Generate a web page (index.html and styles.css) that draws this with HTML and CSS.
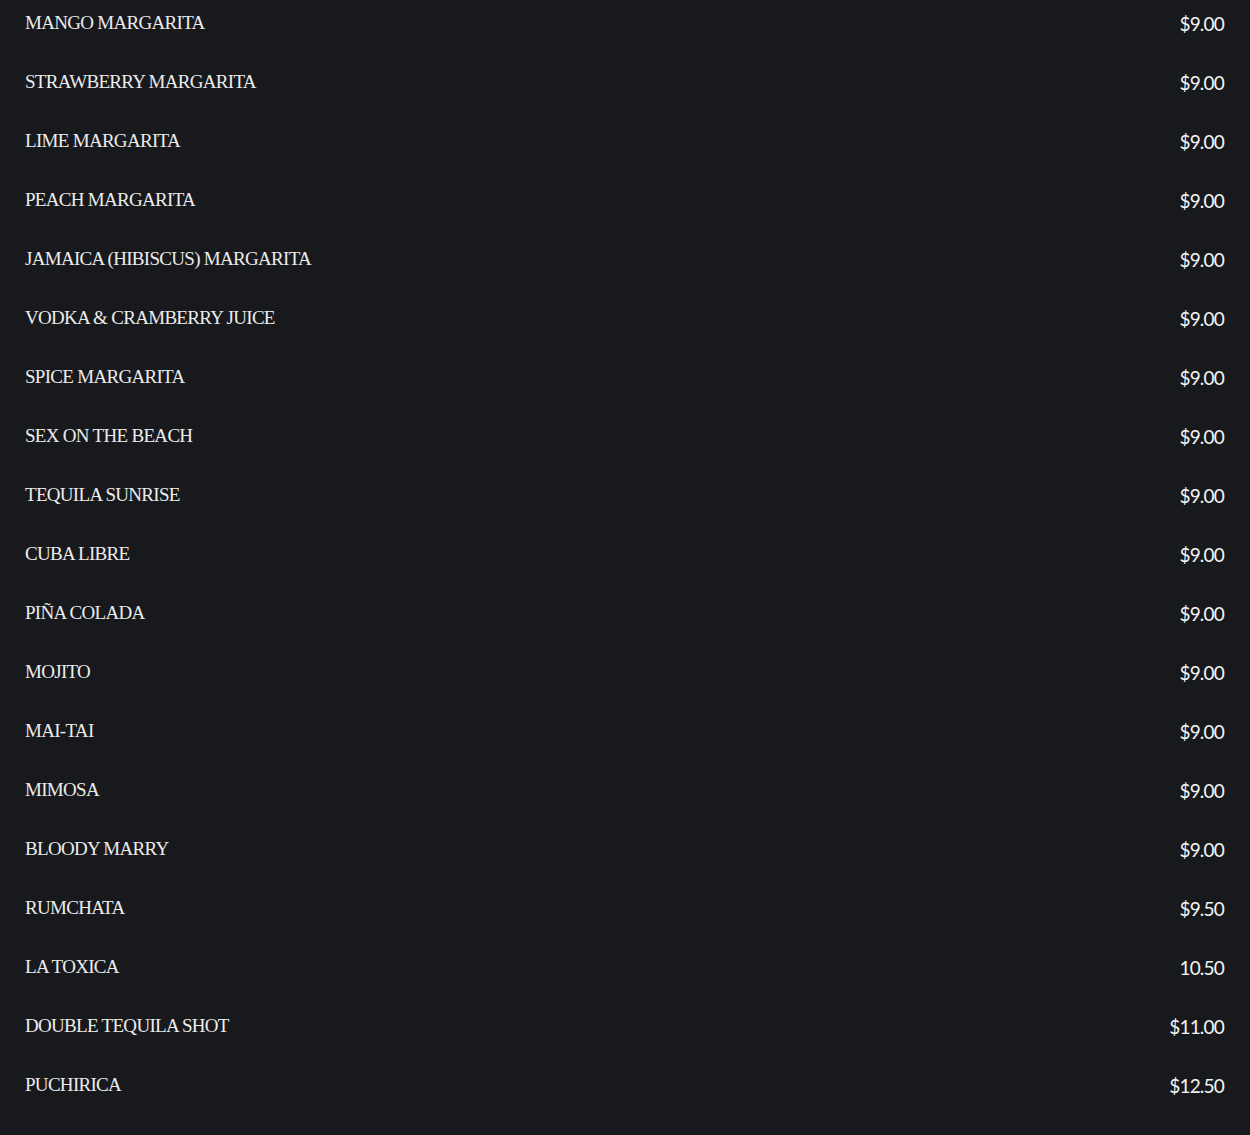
FILE: index.html
```html
<!DOCTYPE html>
<html>
<head>
<meta charset="utf-8">
<link rel="stylesheet" href="styles.css">
</head>
<body>
<ul class="menu">
<li class="item"><span class="name">MANGO MARGARITA</span><span class="price">$9.00</span></li>
<li class="item"><span class="name">STRAWBERRY MARGARITA</span><span class="price">$9.00</span></li>
<li class="item"><span class="name">LIME MARGARITA</span><span class="price">$9.00</span></li>
<li class="item"><span class="name">PEACH MARGARITA</span><span class="price">$9.00</span></li>
<li class="item"><span class="name">JAMAICA (HIBISCUS) MARGARITA</span><span class="price">$9.00</span></li>
<li class="item"><span class="name">VODKA &amp; CRAMBERRY JUICE</span><span class="price">$9.00</span></li>
<li class="item"><span class="name">SPICE MARGARITA</span><span class="price">$9.00</span></li>
<li class="item"><span class="name">SEX ON THE BEACH</span><span class="price">$9.00</span></li>
<li class="item"><span class="name">TEQUILA SUNRISE</span><span class="price">$9.00</span></li>
<li class="item"><span class="name">CUBA LIBRE</span><span class="price">$9.00</span></li>
<li class="item"><span class="name">PIÑA COLADA</span><span class="price">$9.00</span></li>
<li class="item"><span class="name">MOJITO</span><span class="price">$9.00</span></li>
<li class="item"><span class="name">MAI-TAI</span><span class="price">$9.00</span></li>
<li class="item"><span class="name">MIMOSA</span><span class="price">$9.00</span></li>
<li class="item"><span class="name">BLOODY MARRY</span><span class="price">$9.00</span></li>
<li class="item"><span class="name">RUMCHATA</span><span class="price">$9.50</span></li>
<li class="item"><span class="name">LA TOXICA</span><span class="price">10.50</span></li>
<li class="item"><span class="name">DOUBLE TEQUILA SHOT</span><span class="price">$11.00</span></li>
<li class="item"><span class="name">PUCHIRICA</span><span class="price">$12.50</span></li>
<li class="item"><span class="name">MICHELADA</span><span class="price">$12.50</span></li>
</ul>
</body>
</html>
```
FILE: styles.css
```css
html, body {
  margin: 0;
  padding: 0;
  background: #18191c;
  height: 100%;
  overflow: hidden;
}
.menu {
  list-style: none;
  margin: 0;
  padding: 11px 26px 0 25px;
  display: flex;
  flex-direction: column;
  gap: 35px;
}
.item {
  display: flex;
  justify-content: space-between;
  align-items: center;
  height: 24px;
  color: #ececec;
}
.name {
  font-family: "Liberation Serif", serif;
  font-size: 19px;
  letter-spacing: -0.7px;
}
.price {
  font-family: "Lato", sans-serif;
  font-size: 19px;
  letter-spacing: -0.8px;
  color: #f4f4f4;
}
```
